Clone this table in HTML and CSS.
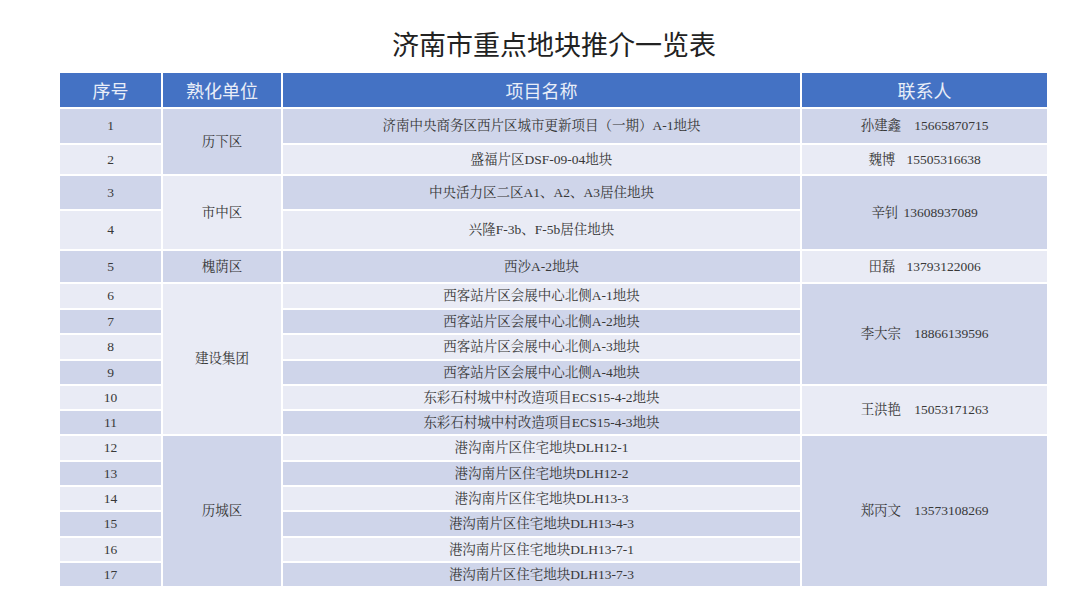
FILE: index.html
```html
<!DOCTYPE html>
<html lang="zh-CN">
<head>
<meta charset="utf-8">
<title>济南市重点地块推介一览表</title>
<link rel="stylesheet" href="styles.css">
</head>
<body>
<div class="page">
  <h1 class="title">济南市重点地块推介一览表</h1>
  <table class="plots">
    <colgroup>
      <col class="c-seq"><col class="c-unit"><col class="c-name"><col class="c-contact">
    </colgroup>
    <thead>
      <tr class="head">
        <th>序号</th><th>熟化单位</th><th>项目名称</th><th>联系人</th>
      </tr>
    </thead>
    <tbody>
      <tr class="h34">
        <td class="seq dark">1</td>
        <td class="dark" rowspan="2">历下区</td>
        <td class="dark">济南中央商务区西片区城市更新项目（一期）A-1地块</td>
        <td class="dark"><span class="nm gl">孙建鑫</span><span class="ph">15665870715</span></td>
      </tr>
      <tr class="h29">
        <td class="seq light">2</td>
        <td class="light">盛福片区DSF-09-04地块</td>
        <td class="light"><span class="nm gm">魏博</span><span class="ph">15505316638</span></td>
      </tr>
      <tr class="h33">
        <td class="seq dark">3</td>
        <td class="light" rowspan="2">市中区</td>
        <td class="dark">中央活力区二区A1、A2、A3居住地块</td>
        <td class="dark" rowspan="2"><span class="nm gs">辛钊</span><span class="ph">13608937089</span></td>
      </tr>
      <tr class="h38">
        <td class="seq light">4</td>
        <td class="light">兴隆F-3b、F-5b居住地块</td>
      </tr>
      <tr class="h31">
        <td class="seq dark">5</td>
        <td class="dark">槐荫区</td>
        <td class="dark">西沙A-2地块</td>
        <td class="light"><span class="nm gm">田磊</span><span class="ph">13793122006</span></td>
      </tr>
      <tr class="h24">
        <td class="seq light">6</td>
        <td class="light" rowspan="6">建设集团</td>
        <td class="light">西客站片区会展中心北侧A-1地块</td>
        <td class="dark" rowspan="4"><span class="nm gl">李大宗</span><span class="ph">18866139596</span></td>
      </tr>
      <tr class="h23">
        <td class="seq dark">7</td>
        <td class="dark">西客站片区会展中心北侧A-2地块</td>
      </tr>
      <tr class="h24">
        <td class="seq light">8</td>
        <td class="light">西客站片区会展中心北侧A-3地块</td>
      </tr>
      <tr class="h23">
        <td class="seq dark">9</td>
        <td class="dark">西客站片区会展中心北侧A-4地块</td>
      </tr>
      <tr class="h23">
        <td class="seq light">10</td>
        <td class="light">东彩石村城中村改造项目ECS15-4-2地块</td>
        <td class="light" rowspan="2"><span class="nm gl">王洪艳</span><span class="ph">15053171263</span></td>
      </tr>
      <tr class="h23">
        <td class="seq dark">11</td>
        <td class="dark">东彩石村城中村改造项目ECS15-4-3地块</td>
      </tr>
      <tr class="h24">
        <td class="seq light">12</td>
        <td class="dark" rowspan="6">历城区</td>
        <td class="light">港沟南片区住宅地块DLH12-1</td>
        <td class="dark" rowspan="6"><span class="nm gl">郑丙文</span><span class="ph">13573108269</span></td>
      </tr>
      <tr class="h23">
        <td class="seq dark">13</td>
        <td class="dark">港沟南片区住宅地块DLH12-2</td>
      </tr>
      <tr class="h23">
        <td class="seq light">14</td>
        <td class="light">港沟南片区住宅地块DLH13-3</td>
      </tr>
      <tr class="h24">
        <td class="seq dark">15</td>
        <td class="dark">港沟南片区住宅地块DLH13-4-3</td>
      </tr>
      <tr class="h23">
        <td class="seq light">16</td>
        <td class="light">港沟南片区住宅地块DLH13-7-1</td>
      </tr>
      <tr class="h23">
        <td class="seq dark">17</td>
        <td class="dark">港沟南片区住宅地块DLH13-7-3</td>
      </tr>
    </tbody>
  </table>
</div>
</body>
</html>
```
FILE: styles.css
```css
html, body {
  margin: 0;
  padding: 0;
  background: #ffffff;
}

.page {
  width: 1080px;
  height: 608px;
  overflow: hidden;
}

.title {
  margin: 0 0 13px 60px;
  width: 988px;
  padding-top: 30px;
  height: 28px;
  line-height: 28px;
  text-align: center;
  font-family: "Noto Sans CJK SC", sans-serif;
  font-size: 27px;
  font-weight: 400;
  color: #222222;
}

.plots {
  margin-left: 58px;
  border-collapse: separate;
  border-spacing: 2px;
  table-layout: fixed;
  width: 991px;
}

.c-seq { width: 101px; }
.c-unit { width: 118px; }
.c-name { width: 517px; }
.c-contact { width: 245px; }

.plots th,
.plots td {
  padding: 0;
  text-align: center;
  vertical-align: middle;
}

.head th {
  height: 34px;
  background: #4472c4;
  color: #e9eef8;
  font-family: "Noto Sans CJK SC", sans-serif;
  font-size: 18px;
  font-weight: 400;
  line-height: 20px;
}

.plots td {
  font-family: "Liberation Serif", "Noto Serif CJK SC", "Noto Sans CJK SC", serif;
  font-size: 13.5px;
  color: #383838;
  line-height: 16px;
  white-space: nowrap;
}

.dark { background: #cfd5ea; }
.light { background: #e9ebf5; }

.h34 .seq { height: 34px; }
.h33 .seq { height: 33px; }
.h38 .seq { height: 38px; }
.h31 .seq { height: 31px; }
.h29 .seq { height: 29px; }
.h24 .seq { height: 24px; }
.h23 .seq { height: 23px; }

.nm { display: inline-block; }
.gs { margin-right: 5px; }
.gm { margin-right: 11px; }
.gl { margin-right: 13px; }
.ph { display: inline-block; }
```
